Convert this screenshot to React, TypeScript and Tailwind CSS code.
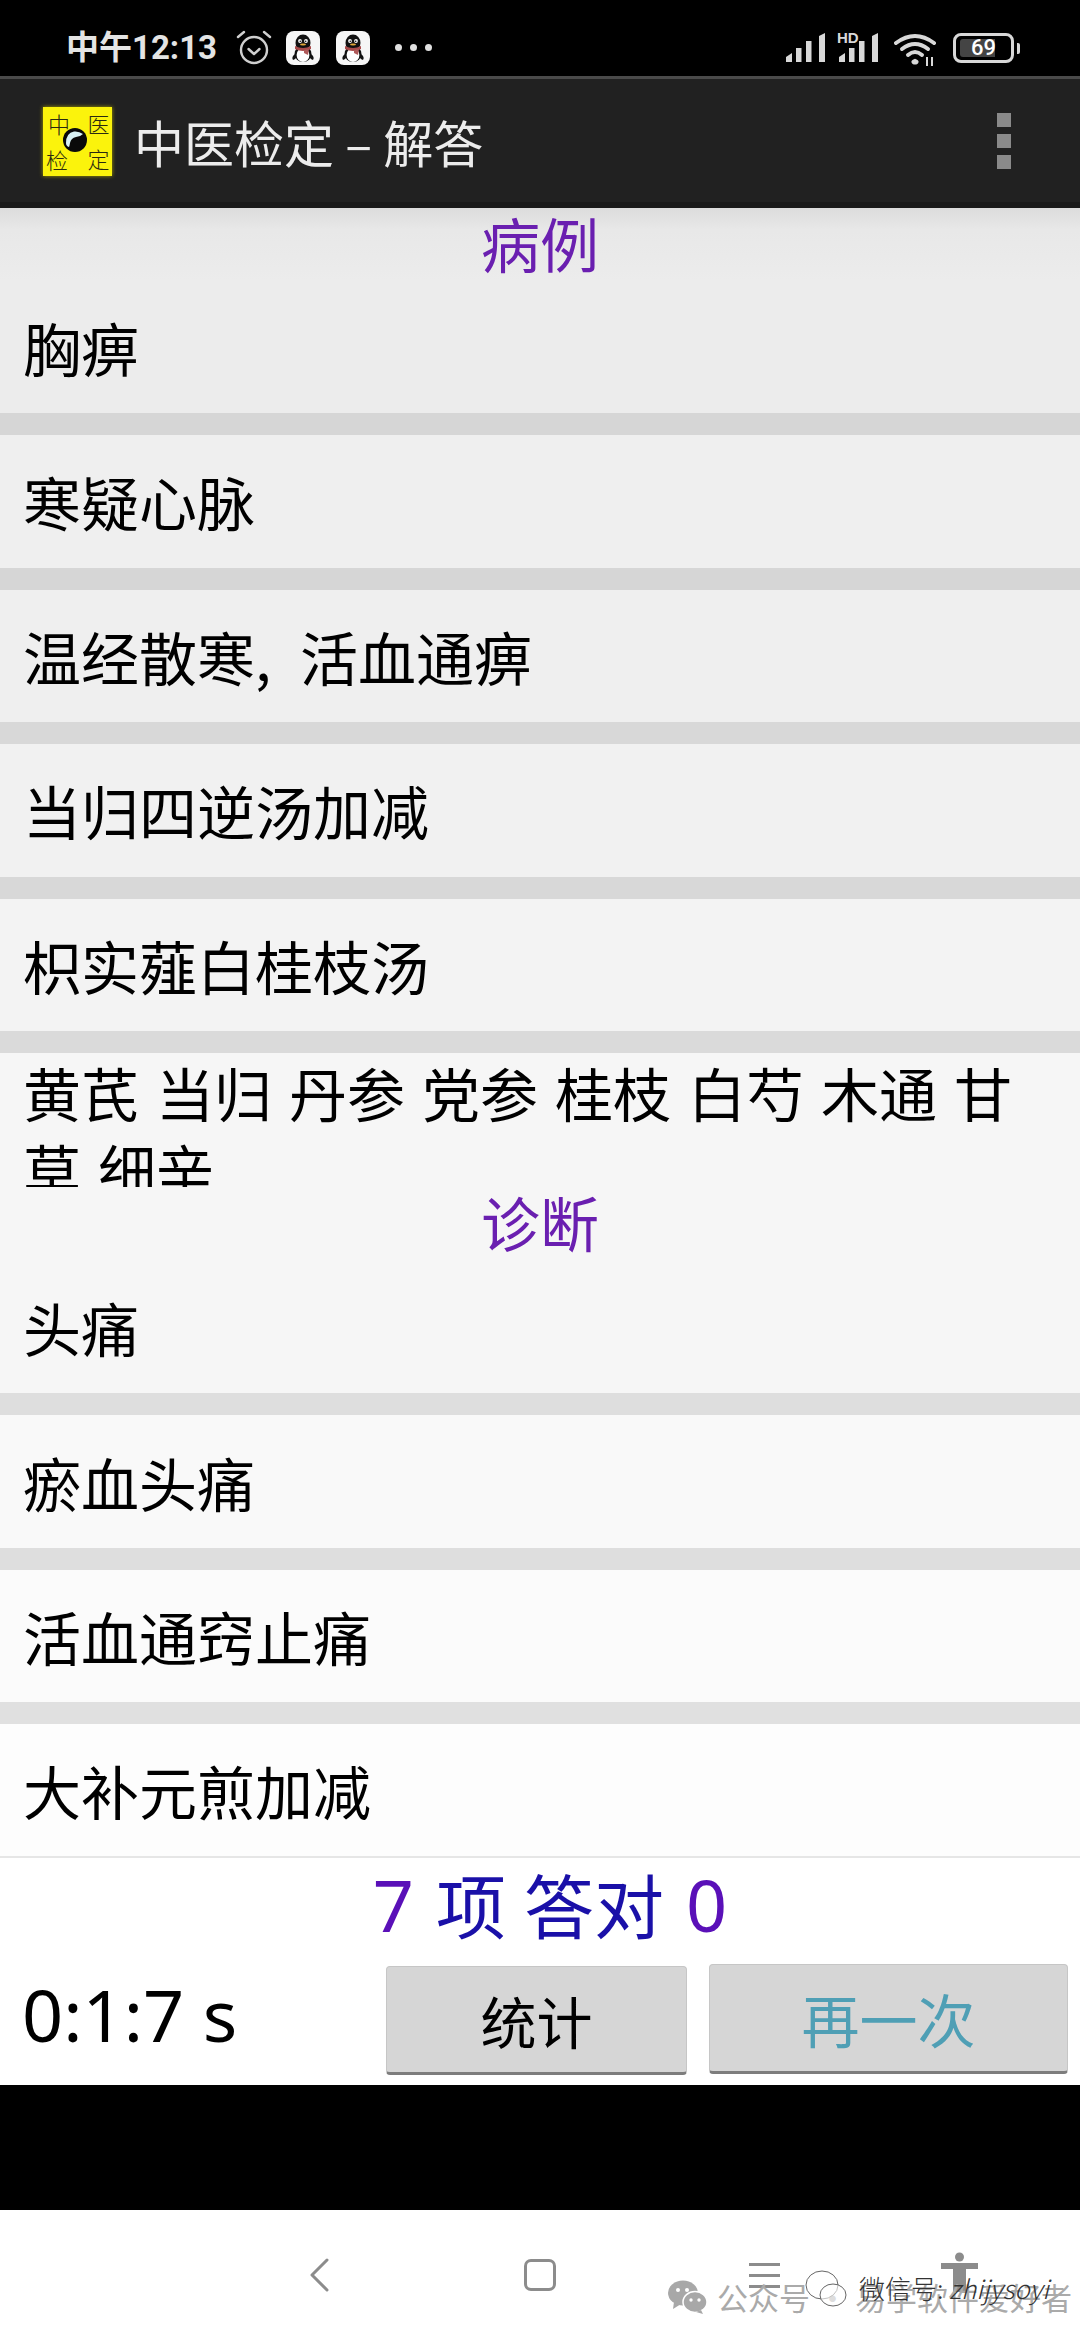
const cjk = "font-['Noto_Sans_CJK_SC','Noto_Sans',sans-serif]";

function Qq() {
  return (
    <div className="w-[34px] h-[34px] rounded-[8px] bg-[#f6f6f6] flex items-center justify-center">
      <svg width="30" height="30" viewBox="0 0 30 30">
        <ellipse cx="15" cy="10" rx="7.5" ry="8.5" fill="#111" />
        <ellipse cx="15" cy="21" rx="8.5" ry="8" fill="#111" />
        <path d="M7 21Q3 24 5 27Q8 26 9 23ZM23 21Q27 24 25 27Q22 26 21 23Z" fill="#111" />
        <ellipse cx="15" cy="22" rx="6.4" ry="7" fill="#fff" />
        <path d="M7 13 Q15 17 23 13 L23 16 Q15 20 7 16Z" fill="#a84a4a" />
        <path d="M16 17 L21 16 L20 22 L16 20Z" fill="#b05a5a" />
        <circle cx="12" cy="8" r="1.9" fill="#fff" />
        <circle cx="18" cy="8" r="1.9" fill="#fff" />
        <circle cx="12.3" cy="8.2" r="0.8" fill="#111" />
        <circle cx="17.7" cy="8.2" r="0.8" fill="#111" />
        <ellipse cx="15" cy="11.5" rx="3" ry="1.1" fill="#e3a93a" />
      </svg>
    </div>
  );
}

function Signal() {
  return (
    <svg width="40" height="29" viewBox="0 0 40 29" fill="#d8d8d8">
      <path d="M0 29V24L6 20V29Z" />
      <rect x="10" y="15" width="5.5" height="14" />
      <rect x="20" y="8" width="5.5" height="21" />
      <path d="M33 3L39 0V29H33Z" />
    </svg>
  );
}

function Row({ text, h, bg }: { text: string; h: string; bg: string }) {
  return (
    <div className={`${h} ${bg} flex items-center pl-[23px] text-[58px] leading-none text-black shrink-0`}>
      {text}
    </div>
  );
}

function Sep({ bg }: { bg: string }) {
  return <div className={`h-[22px] ${bg} shrink-0`} />;
}

export default function App() {
  return (
    <div className={`${cjk} w-[1080px] h-[2340px] relative overflow-hidden flex flex-col bg-white`}>
      {/* status bar */}
      <div className="h-[76px] bg-black flex items-start justify-between shrink-0 pt-[30px] pl-[66px] pr-[60px]">
        <div className="flex items-center">
          <span className="text-[33px] leading-[34px] font-bold text-[#e4e4e4] w-[152px] whitespace-nowrap font-['Roboto','Noto_Sans_CJK_SC',sans-serif]">中午12:13</span>
          <svg className="ml-[18px]" width="36" height="35" viewBox="0 0 36 35" fill="none" stroke="#cfcfcf" strokeWidth="2.4" strokeLinecap="round" strokeLinejoin="round">
            <circle cx="18" cy="20" r="13" />
            <path d="M12.5 19L18 24L23.5 19" />
            <path d="M2 7L8 2M34 7L28 2" />
          </svg>
          <div className="ml-[14px]"><Qq /></div>
          <div className="ml-4"><Qq /></div>
          <div className="ml-[25px] flex gap-[8px]">
            <div className="w-[7px] h-[7px] rounded-full bg-[#e0e0e0]" />
            <div className="w-[7px] h-[7px] rounded-full bg-[#e0e0e0]" />
            <div className="w-[7px] h-[7px] rounded-full bg-[#e0e0e0]" />
          </div>
        </div>
        <div className="flex items-start">
          <div className="mt-[3px]"><Signal /></div>
          <div className="relative ml-[13px] mt-[3px]">
            <Signal />
            <span className="absolute left-[-2px] top-[-3px] text-[15px] leading-[15px] font-bold text-[#d8d8d8] font-['Liberation_Sans',sans-serif]">HD</span>
          </div>
          <svg className="ml-[15px] mt-[3px]" width="43" height="33" viewBox="0 0 43 33" fill="none" stroke="#d8d8d8" strokeWidth="4" strokeLinecap="round">
            <path d="M2 10Q21 -4 40 10" />
            <path d="M8 16Q21 6 34 16" />
            <path d="M14 22Q21 16 28 22" />
            <path d="M20 29L21 28.5L22 29" strokeWidth="5" />
            <path d="M33 24V33M38 24V33" strokeWidth="2" strokeLinecap="butt" />
          </svg>
          <div className="ml-4 mt-[3px] w-[61px] h-[30px] rounded-[8px] border-[3px] border-[#d8d8d8] relative flex items-center">
            <div className="ml-[4px] w-[35px] h-[18px] rounded-l-[3px] bg-[#444]" />
            <span className="absolute left-[15px] top-0 text-[22px] leading-[24px] font-medium text-white font-['Roboto',sans-serif]">69</span>
          </div>
          <div className="ml-[3px] mt-[13px] w-[3px] h-[11px] rounded-r-[2px] bg-[#d8d8d8]" />
        </div>
      </div>
      <div className="h-[3px] bg-[#4a4a4a] shrink-0" />

      {/* toolbar */}
      <div className="h-[129px] bg-[#212121] border-b-[6px] border-[#1a1a1a] flex items-center shrink-0 pl-[43px] pr-[69px]">
        <div className="relative w-[69px] h-[69px] bg-[#fbf30c] shadow-[0_0_4px_#a8a000] grid grid-cols-2 grid-rows-2 text-[22px] leading-none text-[#2a2a10] mt-[1px] font-light">
          <span className="pl-[5px] pt-[5px]">中</span>
          <span className="pl-[10px] pt-[5px]">医</span>
          <span className="pl-[3px] pt-[7px]">检</span>
          <span className="pl-[10px] pt-[6px]">定</span>
          <svg className="absolute left-[20px] top-[21px]" width="24" height="24" viewBox="0 0 24 24">
            <circle cx="12" cy="12" r="12" fill="#0a0a0a" />
            <path d="M3 15Q3 5 11 3.5Q16 3 20 6Q17 9 13 9Q8 10 7 15Q6.5 18 6 19Q3 18 3 15Z" fill="#d8f2f5" />
          </svg>
        </div>
        <span className="ml-[22px] text-[50px] leading-none text-[#ececec] whitespace-nowrap">中医检定 – 解答</span>
        <div className="ml-auto flex flex-col gap-[7px] mt-[1px]">
          <div className="w-[14px] h-[14px] bg-[#8a8a8a]" />
          <div className="w-[14px] h-[14px] bg-[#8a8a8a]" />
          <div className="w-[14px] h-[14px] bg-[#8a8a8a]" />
        </div>
      </div>

      {/* list */}
      <div className="h-[73px] shrink-0 bg-gradient-to-b from-[#dcdcdc] via-[#e8e8e8] via-30% to-[#ececec] flex items-center justify-center text-[59px] leading-none text-[#6a1fb0] pb-[4px]">病例</div>
      <Row text="胸痹" h="h-[132px]" bg="bg-[#ececec]" />
      <Sep bg="bg-[#d6d6d6]" />
      <Row text="寒疑心脉" h="h-[132.5px]" bg="bg-[#efefef]" />
      <Sep bg="bg-[#d6d6d6]" />
      <div className="h-[132.5px] bg-[#efefef] flex items-center pl-[23px] text-[58px] leading-none text-black shrink-0 whitespace-pre [word-spacing:16px]">
        温经散寒, 活血通痹
      </div>
      <Sep bg="bg-[#d8d8d8]" />
      <Row text="当归四逆汤加减" h="h-[132.5px]" bg="bg-[#f1f1f1]" />
      <Sep bg="bg-[#d8d8d8]" />
      <Row text="枳实薤白桂枝汤" h="h-[132.5px]" bg="bg-[#f3f3f3]" />
      <Sep bg="bg-[#dadada]" />
      <div className="h-[134px] shrink-0 overflow-hidden bg-[#f6f6f6] pt-[1px] pl-[23px] pr-6 text-[58px] leading-[77px] text-black [word-spacing:4px]">
        黄芪 当归 丹参 党参 桂枝 白芍 木通 甘草 细辛
      </div>
      <div className="h-[73px] shrink-0 bg-[#f6f6f6] flex items-center justify-center text-[59px] leading-none text-[#6a1fb0] pb-[4px]">诊断</div>
      <Row text="头痛" h="h-[133px]" bg="bg-[#f6f6f6]" />
      <Sep bg="bg-[#dedede]" />
      <Row text="瘀血头痛" h="h-[133px]" bg="bg-[#f9f9f9]" />
      <Sep bg="bg-[#dedede]" />
      <Row text="活血通窍止痛" h="h-[132px]" bg="bg-[#fbfbfb]" />
      <Sep bg="bg-[#e0e0e0]" />
      <Row text="大补元煎加减" h="h-[132px]" bg="bg-[#fdfdfd]" />
      <div className="h-[2px] bg-[#e6e6e6] shrink-0" />

      {/* footer */}
      <div className="h-[227px] shrink-0 bg-white flex flex-col">
        <div className="h-[92px] flex items-center justify-center leading-none whitespace-nowrap pl-[20px]">
          <span className="text-[#5a10b8] text-[72px] font-['Noto_Sans',sans-serif]">7</span>
          <span className="text-[#1a10a8] text-[70px] ml-[22px]">项</span>
          <span className="text-[#1a10a8] text-[70px] ml-[18px]">答对</span>
          <span className="text-[#5a10b8] text-[72px] ml-[22px] font-['Noto_Sans',sans-serif]">0</span>
        </div>
        <div className="flex items-start pr-3 mt-[14px]">
          <span className="flex-1 pl-[22px] pt-[5px] text-[72px] leading-[90px] text-black font-['Noto_Sans',sans-serif]">0:1:7 s</span>
          <div className="w-[301px] h-[109px] mt-[2px] rounded-[4px] bg-[#d6d6d6] border border-[#c6c6c6] border-b-[3px] border-b-[#7d7d7d] flex items-center justify-center text-[56px] leading-none text-black">统计</div>
          <div className="ml-[22px] w-[359px] h-[110px] rounded-[4px] bg-[#d6d6d6] border border-[#c6c6c6] border-b-[3px] border-b-[#7d7d7d] flex items-center justify-center text-[58px] leading-none text-[#4f9fb5]">再一次</div>
        </div>
      </div>

      <div className="h-[125px] bg-black shrink-0" />

      {/* nav bar */}
      <div className="flex-1 bg-white relative flex items-start pt-[42px] pl-[308px]">
        <svg className="mt-[6px]" width="22" height="34" viewBox="0 0 22 34" fill="none" stroke="#8c8c8c" strokeWidth="3" strokeLinecap="round" strokeLinejoin="round">
          <path d="M19 2L4 17L19 32" />
        </svg>
        <div className="ml-[194px] mt-[7px] w-[32px] h-[32px] rounded-[7px] border-[3px] border-[#8c8c8c]" />
        <div className="ml-[193px] mt-[11px] w-[31px] flex flex-col gap-[8px]">
          <div className="h-[3px] bg-[#8c8c8c]" />
          <div className="h-[3px] bg-[#8c8c8c]" />
          <div className="h-[3px] bg-[#8c8c8c]" />
        </div>
        <svg className="ml-[161px]" width="37" height="50" viewBox="0 0 37 50" fill="#8c8c8c">
          <circle cx="18.5" cy="5" r="4.5" />
          <path d="M0 11H37V17H25V40H12V17H0Z" />
        </svg>

        {/* watermark */}
        <svg className="absolute left-[668px] top-[70px]" width="39" height="34" viewBox="0 0 39 34" fill="#a8a8a8">
          <ellipse cx="15" cy="13" rx="15" ry="12.5" />
          <path d="M6 22L5 29L13 24Z" />
          <ellipse cx="27" cy="22" rx="12" ry="10.5" fill="#a8a8a8" stroke="#fff" strokeWidth="1.5" />
          <path d="M33 30L35 34L28 32Z" />
          <circle cx="10" cy="10" r="2" fill="#fff" />
          <circle cx="19" cy="10" r="2" fill="#fff" />
          <circle cx="23" cy="20" r="1.7" fill="#fff" />
          <circle cx="31" cy="20" r="1.7" fill="#fff" />
        </svg>
        <span className="absolute left-[717px] top-[70px] text-[31px] leading-[34px] text-[#aaaaaa] whitespace-nowrap">公众号 · 易学软件爱好者</span>
        <svg className="absolute left-[805px] top-[60px]" width="42" height="40" viewBox="0 0 42 40" fill="none" stroke="#666" strokeWidth="1">
          <ellipse cx="17" cy="15" rx="16" ry="14" />
          <ellipse cx="28" cy="25" rx="13" ry="11" fill="#fff" fillOpacity="0.6" />
        </svg>
        <span className="absolute left-[859px] top-[63px] text-[26px] leading-[30px] text-[#333] whitespace-nowrap font-light">微信号: <span className="italic">zhijysoyi</span></span>
      </div>
    </div>
  );
}
